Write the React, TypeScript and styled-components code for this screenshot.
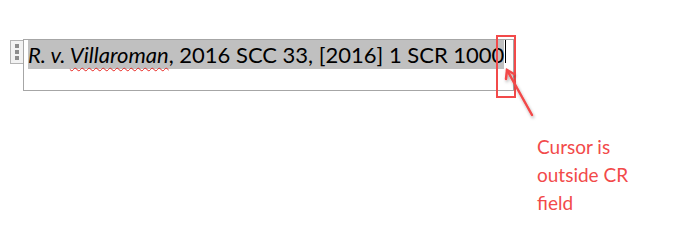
import React from 'react';
import styled, { createGlobalStyle } from 'styled-components';

const Global = createGlobalStyle`
  html, body {
    margin: 0;
    padding: 0;
    background: #fff;
  }
  body {
    width: 678px;
    height: 224px;
    overflow: hidden;
    font-family: 'Lato', 'Liberation Sans', sans-serif;
  }
`;

const Page = styled.div`
  display: flex;
  flex-direction: column;
  padding: 39px 0 0 10px;
`;

const EditorRow = styled.div`
  display: flex;
  align-items: flex-start;
`;

const Handle = styled.div`
  width: 12px;
  height: 20px;
  margin-top: 1px;
  border: 1px solid #b4b4b4;
  border-right: none;
  background: #f2f2f2;
  display: flex;
  flex-direction: column;
  align-items: center;
  justify-content: space-evenly;
  padding: 1px 0;
  box-sizing: content-box;
`;

const Dot = styled.span`
  width: 4px;
  height: 4px;
  background: #8c8c8c;
`;

const Field = styled.div`
  position: relative;
  width: 485px;
  height: 50px;
  border: 1px solid #a6a6a6;
  padding: 0 0 0 4px;
  box-sizing: content-box;
`;

const Line = styled.div`
  display: flex;
  align-items: flex-start;
  white-space: nowrap;
`;

const Highlight = styled.span`
  background: #c0c0c0;
  color: #000;
  font-family: 'Lato', sans-serif;
  font-size: 22px;
  line-height: 29px;
  height: 29px;
`;

const Case = styled.i`
  font-style: italic;
`;

const Squiggle = styled.span`
  text-decoration: underline wavy #e8231e;
  text-decoration-thickness: 1px;
  text-underline-offset: 4px;
`;

const Caret = styled.span`
  width: 1px;
  height: 23px;
  background: #000;
  margin-left: 1px;
`;

const RedBox = styled.div`
  position: absolute;
  left: 472px;
  top: -5px;
  width: 16px;
  height: 59px;
  border: 2px solid #f24a4a;
`;

const Arrow = styled.svg`
  position: absolute;
  left: 480px;
  top: 27px;
  overflow: visible;
`;

const Note = styled.div`
  margin: 42px 0 0 527px;
  color: #f24a4a;
  font-family: 'Lato', 'Liberation Sans', sans-serif;
  font-size: 19px;
  line-height: 28px;
`;

export default function App() {
  return (
    <>
      <Global />
      <Page>
        <EditorRow>
          <Handle>
            <Dot />
            <Dot />
            <Dot />
          </Handle>
          <Field>
            <Line>
              <Highlight>
                <Case>R. v. <Squiggle>Villaroman</Squiggle></Case>, 2016 SCC 33, [2016] 1 SCR 1000
              </Highlight>
              <Caret />
            </Line>
            <RedBox />
            <Arrow width="32" height="52" viewBox="0 0 32 52">
              <defs>
                <filter id="sh" x="-50%" y="-50%" width="200%" height="200%">
                  <feDropShadow dx="1" dy="2" stdDeviation="1.5" floodColor="#000" floodOpacity="0.3" />
                </filter>
              </defs>
              <g filter="url(#sh)" stroke="#f24a4a" strokeWidth="2.5" fill="none" strokeLinecap="round">
                <line x1="28" y1="48" x2="3" y2="3" />
                <polyline points="2,12 3,3 10,7" />
              </g>
            </Arrow>
          </Field>
        </EditorRow>
        <Note>
          Cursor is
          <br />
          outside CR
          <br />
          field
        </Note>
      </Page>
    </>
  );
}
